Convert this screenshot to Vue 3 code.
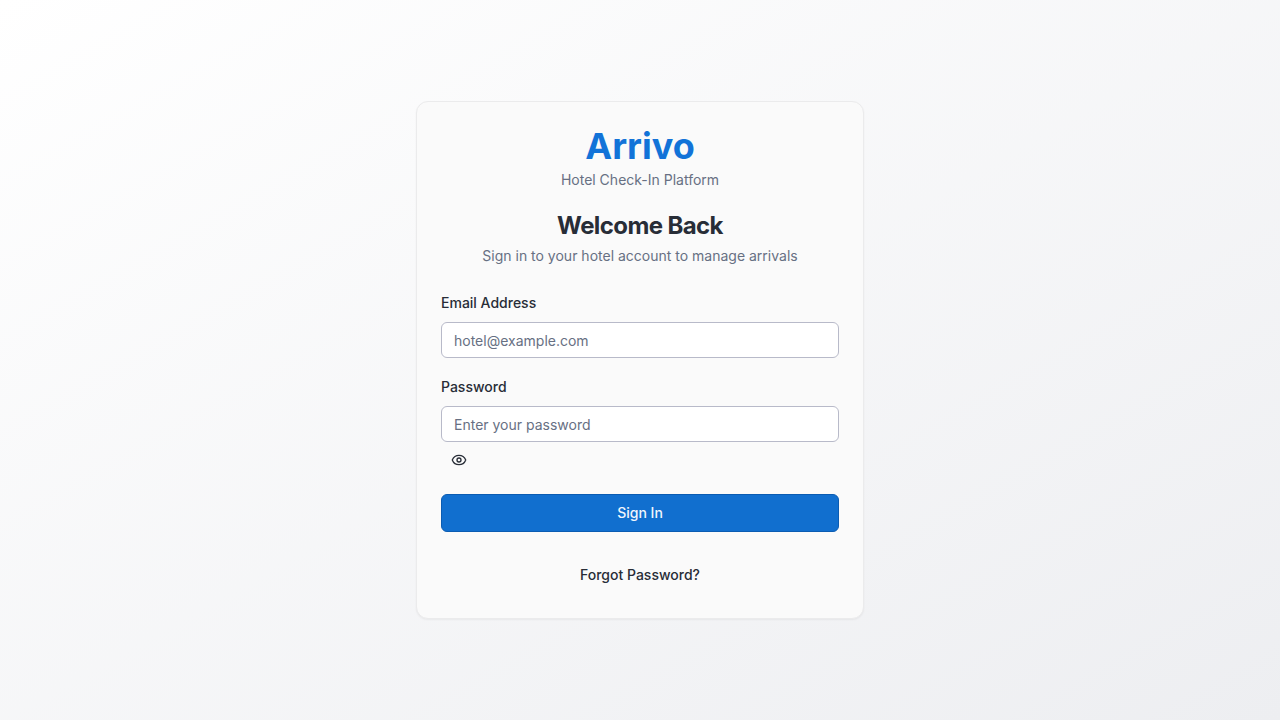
<script setup>
import { ref } from 'vue'

const email = ref('')
const password = ref('')
const showPassword = ref(false)
</script>

<template>
  <main class="page">
    <section class="card">
      <header class="head">
        <h1 class="brand">Arrivo</h1>
        <p class="muted">Hotel Check-In Platform</p>
        <h2 class="title">Welcome Back</h2>
        <p class="muted">Sign in to your hotel account to manage arrivals</p>
      </header>
      <form class="form" @submit.prevent>
        <div class="field">
          <label for="email">Email Address</label>
          <input id="email" v-model="email" type="email" placeholder="hotel@example.com" />
        </div>
        <div class="field">
          <label for="password">Password</label>
          <input
            id="password"
            v-model="password"
            :type="showPassword ? 'text' : 'password'"
            placeholder="Enter your password"
          />
        </div>
        <button class="toggle" type="button" aria-label="Show password" @click="showPassword = !showPassword">
          <svg viewBox="0 0 24 24" width="16" height="16" fill="none" stroke="currentColor" stroke-width="2" stroke-linecap="round" stroke-linejoin="round">
            <path d="M2.062 12.348a1 1 0 0 1 0-.696 10.75 10.75 0 0 1 19.876 0 1 1 0 0 1 0 .696 10.75 10.75 0 0 1-19.876 0" />
            <circle cx="12" cy="12" r="3" />
          </svg>
        </button>
        <button class="submit" type="submit">Sign In</button>
      </form>
      <button class="forgot" type="button">Forgot Password?</button>
    </section>
  </main>
</template>

<style>
body {
  margin: 0;
}
</style>

<style scoped>
* {
  box-sizing: border-box;
}

.page {
  min-height: 100vh;
  display: flex;
  align-items: center;
  justify-content: center;
  padding: 16px;
  background: linear-gradient(to bottom right, #ffffff, #edeef1);
  color: #282d37;
  font-family: Inter, "Liberation Sans", sans-serif;
  font-size: 14px;
  line-height: 20px;
}

.card {
  display: flex;
  flex-direction: column;
  width: 100%;
  max-width: 448px;
  padding: 24px;
  border: 1px solid #ebebec;
  border-radius: 12px;
  background: #fafafa;
  box-shadow: 0 1px 2px rgba(0, 0, 0, 0.05);
}

.head {
  text-align: center;
}

.brand,
.title,
.muted {
  margin: 0;
}

.brand {
  color: #1273d8;
  font-size: 36px;
  font-weight: 700;
  line-height: 40px;
  margin-bottom: 4px;
}

.title {
  margin: 20px 0 4px;
  font-size: 24px;
  font-weight: 700;
  line-height: 32px;
  letter-spacing: -0.6px;
}

.muted {
  color: #677083;
}

.form {
  display: flex;
  flex-direction: column;
  margin-top: 28px;
}

.field {
  display: flex;
  flex-direction: column;
  gap: 10px;
}

.field + .field {
  margin-top: 20px;
}

.field label {
  font-weight: 500;
  line-height: 18px;
}

.field input {
  width: 100%;
  height: 36px;
  padding: 4px 12px;
  border: 1px solid #b8bac9;
  border-radius: 6px;
  background: #ffffff;
  color: inherit;
  font: inherit;
  outline: none;
}

.field input::placeholder {
  color: #677083;
  opacity: 1;
}

.toggle {
  display: flex;
  align-items: center;
  justify-content: center;
  align-self: flex-start;
  width: 36px;
  height: 36px;
  padding: 0;
  border: 0;
  background: transparent;
  color: inherit;
}

.submit {
  height: 38px;
  margin-top: 16px;
  border: 1px solid #0b5cb2;
  border-radius: 6px;
  background: #116fcf;
  color: #f0f6fc;
  font: inherit;
  font-weight: 500;
}

.forgot {
  align-self: center;
  height: 38px;
  margin-top: 24px;
  padding: 0 16px;
  border: 0;
  background: transparent;
  color: inherit;
  font: inherit;
  font-weight: 500;
}
</style>
